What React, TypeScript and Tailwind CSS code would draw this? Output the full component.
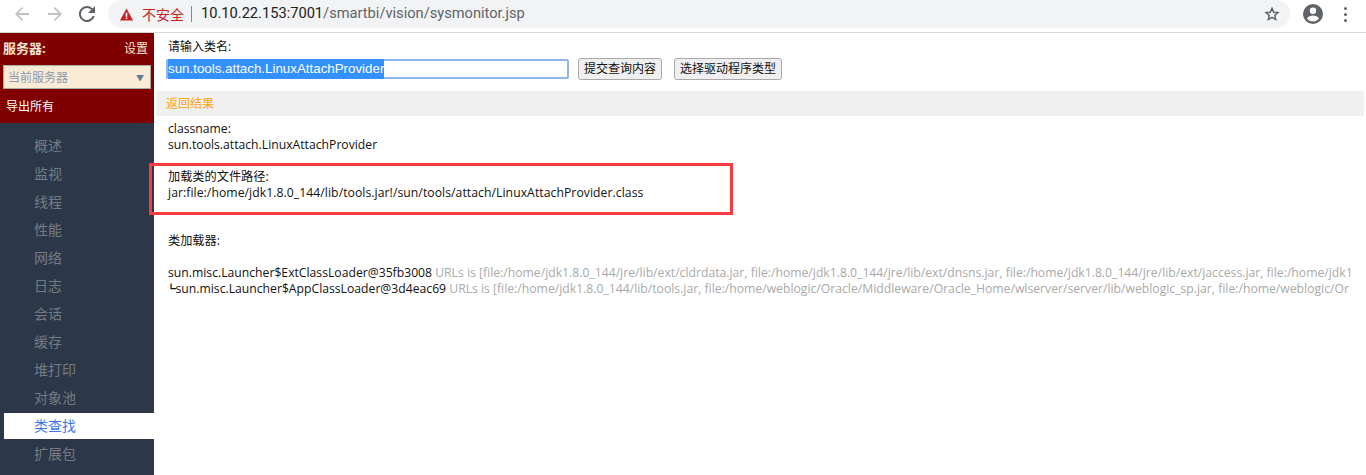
const sans = "font-['Open_Sans','Noto_Sans_CJK_SC',sans-serif]"

const menuItems = ['概述', '监视', '线程', '性能', '网络', '日志', '会话', '缓存', '堆打印', '对象池', '类查找', '扩展包']

const BrowserBar = () => (
  <div className="flex h-[33px] items-center border-b border-[#d5d7da] bg-white pb-[4px]">
    <div className="flex w-[108px] shrink-0 items-center pl-[14px]">
      <svg className="h-4 w-4 text-[#c0c2c5]" viewBox="0 0 16 16" fill="currentColor">
        <path d="M15 7.100H4.400l4.900-4.900L8 1 1 8l7 7 1.200-1.200-4.800-4.900H15z" />
      </svg>
      <svg className="ml-[17px] h-4 w-4 text-[#c0c2c5]" viewBox="0 0 16 16" fill="currentColor">
        <path d="M1 7.100h10.600L6.700 2.200 8 1l7 7-7 7-1.200-1.200 4.800-4.900H1z" />
      </svg>
      <svg className="ml-[16px] h-4 w-4 text-[#5f6368]" viewBox="0 0 16 16" fill="currentColor">
        <path d="M13.600 2.400A8 8 0 1 0 15.700 10h-2.100a6 6 0 1 1-1.400-6.200L9 7h7V0z" />
      </svg>
    </div>
    <div className="flex h-[28px] flex-1 items-center rounded-[14px] bg-[#f1f3f4] pl-[11px]">
      <svg className="h-[15px] w-[15px]" viewBox="0 0 16 16">
        <path d="M8 1.500 15 14.500H1z" fill="#c5221f" />
        <rect x="7.200" y="6" width="1.600" height="4.600" fill="#fff" />
        <rect x="7.200" y="11.300" width="1.600" height="1.600" fill="#fff" />
      </svg>
      <span className={`${sans} ml-[8px] text-[14px] text-[#c5221f]`}>不安全</span>
      <div className="ml-[7px] h-[16px] w-px bg-[#80868b]" />
      <span className="ml-[9px] font-['Roboto',sans-serif] text-[14.65px] text-[#202124]">
        10.10.22.153:7001<span className="text-[#5f6368]">/smartbi/vision/sysmonitor.jsp</span>
      </span>
      <svg className="ml-auto mr-[10px] h-[16px] w-[16px] text-[#5f6368]" viewBox="0 0 24 24" fill="none" stroke="currentColor" strokeWidth="2.200">
        <path d="M12 3.500l2.600 5.800 6.300.7-4.700 4.200 1.300 6.200L12 17.200l-5.500 3.200 1.300-6.200L3.100 10l6.300-.7z" />
      </svg>
    </div>
    <div className="flex w-[76px] shrink-0 items-center pl-[13px]">
      <svg className="h-[20px] w-[20px] text-[#5f6368]" viewBox="0 0 20 20" fill="currentColor">
        <path fillRule="evenodd" d="M10 0a10 10 0 1 0 0 20 10 10 0 0 0 0-20zm0 3.500a3.200 3.200 0 1 1 0 6.400 3.200 3.200 0 0 1 0-6.400zM4 14.600c.8-2 3.800-3.100 6-3.100s5.200 1.100 6 3.100a7.500 7.500 0 0 1-12 0z" />
      </svg>
      <div className="ml-[21px] flex flex-col gap-[3px]">
        <div className="h-[3px] w-[3px] rounded-full bg-[#5f6368]" />
        <div className="h-[3px] w-[3px] rounded-full bg-[#5f6368]" />
        <div className="h-[3px] w-[3px] rounded-full bg-[#5f6368]" />
      </div>
    </div>
  </div>
)

const Sidebar = () => (
  <aside className={`${sans} flex w-[154px] shrink-0 flex-col bg-[#2c3849]`}>
    <div className="h-[90px] bg-[#800000] px-[3px] pt-[6px] text-[12px] text-[#f5e6d3]">
      <div className="flex h-[20px] items-center justify-between pr-[3px]">
        <span className="text-[13px] font-bold">服务器:</span>
        <span>设置</span>
      </div>
      <div className="mt-[6px] flex h-[24px] w-[148px] items-center justify-between border border-[#a9a9a9] bg-[#faebd7] pl-[4px] pr-[6px] pt-px text-[#8d99ae]">
        <span>当前服务器</span>
        <span className="text-[8px] text-[#5f7a9a]">▼</span>
      </div>
      <div className="mt-[9px] h-[20px] pl-[3px] text-white">导出所有</div>
    </div>
    <nav className="flex flex-col pt-[8px]">
      {menuItems.map((item) => (
        <div
          key={item}
          className={
            item === '类查找'
              ? 'ml-[4px] mt-[2px] flex h-[26px] items-center bg-white pb-[2px] pl-[30px] text-[14px] text-[#3b78e7]'
              : 'ml-[4px] flex h-[28px] items-center pl-[30px] text-[14px] text-[#757b83]'
          }
        >
          {item}
        </div>
      ))}
    </nav>
  </aside>
)

const Main = () => (
  <main className={`${sans} relative min-w-0 flex-1 text-[12.2px] text-[#111]`}>
    <div className="pl-[12px] pt-[6px]">
      <div className="h-[16px] pl-[2px] text-[12px] leading-[16px]">请输入类名:</div>
      <div className="mt-[3px] flex h-[22px] items-center">
        <div className="flex h-[20px] w-[403px] items-center rounded-[2px] border-2 border-[#8fb4ee] bg-white font-['Liberation_Sans',sans-serif] text-[13.33px]">
          <span className="bg-[#3390ff] text-white">sun.tools.attach.LinuxAttachProvider</span>
        </div>
        <button className="ml-[9px] h-[22px] w-[84px] rounded-[3px] border border-[#a9a9a9] bg-[#efefef] text-[12px]">提交查询内容</button>
        <button className="ml-[12px] h-[22px] w-[108px] rounded-[3px] border border-[#a9a9a9] bg-[#efefef] text-[12px]">选择驱动程序类型</button>
      </div>
    </div>
    <div className="mt-[11px] mr-[2px] ml-[2px] flex h-[25px] items-center bg-[#f0f0f0] pl-[10px] text-[12px] text-[#ffa500]">返回结果</div>
    <div className="pl-[14px] pt-[5px] leading-[16px]">
      <div>classname:</div>
      <div>sun.tools.attach.LinuxAttachProvider</div>
      <div className="mt-[16px]">加载类的文件路径:</div>
      <div className="tracking-[0.06px]">jar:file:/home/jdk1.8.0_144/lib/tools.jar!/sun/tools/attach/LinuxAttachProvider.class</div>
      <div className="mt-[32px]">类加载器:</div>
      <div className="mt-[16px] whitespace-nowrap">
        sun.misc.Launcher$ExtClassLoader@35fb3008{' '}
        <span className="text-[#a9a9a9]">URLs is [file:/home/jdk1.8.0_144/jre/lib/ext/cldrdata.jar, file:/home/jdk1.8.0_144/jre/lib/ext/dnsns.jar, file:/home/jdk1.8.0_144/jre/lib/ext/jaccess.jar, file:/home/jdk1</span>
      </div>
      <div className="whitespace-nowrap">
        <span className="ml-[-2px] inline-block w-[9.5px] text-[10px] font-bold leading-[8px]">┗</span>
        sun.misc.Launcher$AppClassLoader@3d4eac69{' '}
        <span className="text-[#a9a9a9]">URLs is [file:/home/jdk1.8.0_144/lib/tools.jar, file:/home/weblogic/Oracle/Middleware/Oracle_Home/wlserver/server/lib/weblogic_sp.jar, file:/home/weblogic/Or</span>
      </div>
    </div>
    {/* annotation box drawn over the page */}
    <div className="absolute left-[-5px] top-[130px] h-[52px] w-[584px] border-[3px] border-[#f93a3e]" />
  </main>
)

export default function App() {
  return (
    <div className="flex h-[475px] w-[1366px] flex-col overflow-hidden bg-white">
      <BrowserBar />
      <div className="flex min-h-0 flex-1">
        <Sidebar />
        <Main />
      </div>
    </div>
  )
}
